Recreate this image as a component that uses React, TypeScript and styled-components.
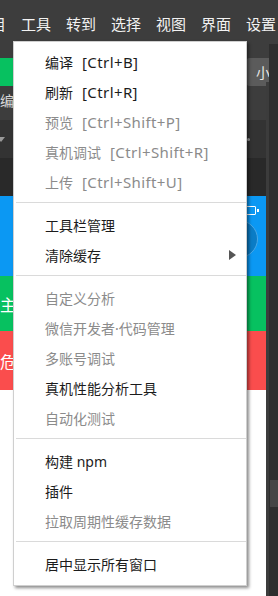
import React from "react";
import styled, { createGlobalStyle } from "styled-components";

const Global = createGlobalStyle`
  html, body { margin: 0; padding: 0; }
  body {
    width: 278px;
    height: 596px;
    overflow: hidden;
    background: #2d2d2d;
    font-family: "Noto Sans", "Noto Sans CJK SC", sans-serif;
  }
`;

const Page = styled.div`
  position: relative;
  width: 278px;
  height: 596px;
  overflow: hidden;
  display: flex;
  flex-direction: column;
`;

const MenuBar = styled.div`
  height: 40px;
  flex: none;
  background: #3d3d3d;
  display: flex;
  align-items: center;
  padding-top: 7px;
  box-sizing: border-box;
  margin-left: -24px;
  gap: 15px;
`;

const BarItem = styled.span`
  color: #f2f2f2;
  font-size: 15px;
  white-space: nowrap;
  width: 30px;
  flex: none;
`;

const Toolbar = styled.div`
  height: 80px;
  flex: none;
  background: #3d3d3d;
  display: grid;
  grid-template-columns: 1fr auto;
  grid-template-rows: 18px 28px 34px;
`;

const GreenBtn = styled.div`
  grid-row: 2;
  grid-column: 1;
  width: 60px;
  background: #07c160;
  color: #fff;
  font-size: 14px;
  display: flex;
  align-items: center;
  justify-content: flex-end;
  padding-right: 48px;
`;

const ModeBtn = styled.div`
  grid-row: 2;
  grid-column: 2;
  margin-right: -30px;
  width: 52px;
  background: #5b5b5b;
  border-radius: 4px;
  color: #e8e8e8;
  font-size: 14px;
  display: flex;
  align-items: center;
  padding-left: 10px;
  white-space: nowrap;
  overflow: hidden;
`;

const ToolLabel = styled.div`
  grid-row: 3;
  grid-column: 1;
  color: #d8d8d8;
  font-size: 14px;
  display: flex;
  align-items: center;
  padding-bottom: 6px;
`;

const Workspace = styled.div`
  flex: 1;
  display: flex;
`;

const Simulator = styled.div`
  width: 266px;
  flex: none;
  display: flex;
  flex-direction: column;
  background: #ffffff;
`;

const SimHeader = styled.div`
  height: 38px;
  background: #333333;
  display: flex;
  align-items: center;
  justify-content: space-between;
  padding: 0 16px 0 0;
`;

const Caret = styled.span`
  width: 0;
  height: 0;
  border-left: 4px solid transparent;
  border-right: 4px solid transparent;
  border-top: 5px solid #9a9a9a;
  margin-left: -3px;
`;

const Dot = styled.span`
  width: 3px;
  height: 3px;
  border-radius: 50%;
  background: #9a9a9a;
`;

const SimSub = styled.div`
  height: 38px;
  background: #292929;
`;

const NavBar = styled.div`
  height: 80px;
  background: #0b98f3;
  position: relative;
`;

const Battery = styled.div`
  position: absolute;
  top: 10px;
  right: 10px;
  width: 9px;
  height: 7px;
  border: 1px solid #ffffff;
  border-radius: 1px;
  &::after {
    content: "";
    position: absolute;
    right: -4px;
    top: 2px;
    width: 2px;
    height: 3px;
    background: #fff;
  }
`;

const Avatar = styled.div`
  position: absolute;
  top: 24px;
  right: 8px;
  width: 36px;
  height: 36px;
  border-radius: 50%;
  background: #0a7cc6;
  border: 1px solid #4aa8e6;
`;

const ColorRow = styled.div<{ $bg: string; $h: number }>`
  height: ${(p) => p.$h}px;
  background: ${(p) => p.$bg};
  color: #ffffff;
  font-family: "Noto Sans CJK SC", sans-serif;
  font-size: 16px;
  display: flex;
  align-items: center;
  white-space: nowrap;
`;

const Divider = styled.div`
  width: 3px;
  flex: none;
  margin-top: -38px;
  background: #3c3c3c;
`;

const Editor = styled.div`
  flex: 1;
  margin-top: -76px;
  background: #2e2e2e;
  display: flex;
  flex-direction: column;
  align-items: stretch;
  padding-top: 436px;
`;

const Thumb = styled.div`
  height: 27px;
  margin-left: 1px;
  background: #454545;
`;

const Menu = styled.div`
  position: absolute;
  left: 13px;
  top: 41px;
  width: 234px;
  box-sizing: border-box;
  background: #ffffff;
  border: 1px solid #cfcfcf;
  box-shadow: 2px 2px 3px rgba(0, 0, 0, 0.45);
  padding: 5px 0 6px 0;
`;

const Item = styled.div<{ $disabled?: boolean }>`
  height: 30px;
  display: flex;
  align-items: center;
  padding-left: 31px;
  padding-right: 10px;
  font-size: 14px;
  color: ${(p) => (p.$disabled ? "#8b8b8b" : "#1c1c1c")};
  white-space: nowrap;
`;

const Label = styled.span`
  flex: 1;
`;

const Shortcut = styled.span`
  margin-left: 9px;
  font-size: 15px;
  letter-spacing: 0.4px;
`;

const Arrow = styled.span`
  width: 0;
  height: 0;
  border-top: 5px solid transparent;
  border-bottom: 5px solid transparent;
  border-left: 7px solid #555555;
`;

const Sep = styled.div`
  height: 1px;
  background: #dadada;
  margin: 5px 0 7px 2px;
`;

type Entry =
  | { kind: "item"; label: string; shortcut?: string; disabled?: boolean; sub?: boolean }
  | { kind: "sep" };

const entries: Entry[] = [
  { kind: "item", label: "编译", shortcut: "[Ctrl+B]" },
  { kind: "item", label: "刷新", shortcut: "[Ctrl+R]" },
  { kind: "item", label: "预览", shortcut: "[Ctrl+Shift+P]", disabled: true },
  { kind: "item", label: "真机调试", shortcut: "[Ctrl+Shift+R]", disabled: true },
  { kind: "item", label: "上传", shortcut: "[Ctrl+Shift+U]", disabled: true },
  { kind: "sep" },
  { kind: "item", label: "工具栏管理" },
  { kind: "item", label: "清除缓存", sub: true },
  { kind: "sep" },
  { kind: "item", label: "自定义分析", disabled: true },
  { kind: "item", label: "微信开发者·代码管理", disabled: true },
  { kind: "item", label: "多账号调试", disabled: true },
  { kind: "item", label: "真机性能分析工具" },
  { kind: "item", label: "自动化测试", disabled: true },
  { kind: "sep" },
  { kind: "item", label: "构建 npm" },
  { kind: "item", label: "插件" },
  { kind: "item", label: "拉取周期性缓存数据", disabled: true },
  { kind: "sep" },
  { kind: "item", label: "居中显示所有窗口" },
];

const menus = ["项目", "工具", "转到", "选择", "视图", "界面", "设置"];

export default function App() {
  return (
    <>
      <Global />
      <Page>
        <MenuBar>
          {menus.map((m) => (
            <BarItem key={m}>{m}</BarItem>
          ))}
        </MenuBar>
        <Toolbar>
          <GreenBtn>‹</GreenBtn>
          <ModeBtn>小程序</ModeBtn>
          <ToolLabel>编译</ToolLabel>
        </Toolbar>
        <Workspace>
          <Simulator>
            <SimHeader>
              <Caret />
              <Dot />
            </SimHeader>
            <SimSub />
            <NavBar>
              <Battery />
              <Avatar />
            </NavBar>
            <ColorRow $bg="#07c160" $h={55}>主要操作</ColorRow>
            <ColorRow $bg="#fa4d4d" $h={59}>危险操作</ColorRow>
          </Simulator>
          <Divider />
          <Editor>
            <Thumb />
          </Editor>
        </Workspace>
        <Menu>
          {entries.map((e, i) =>
            e.kind === "sep" ? (
              <Sep key={i} />
            ) : (
              <Item key={i} $disabled={e.disabled}>
                <Label>
                  {e.label}
                  {e.shortcut && <Shortcut>{e.shortcut}</Shortcut>}
                </Label>
                {e.sub && <Arrow />}
              </Item>
            )
          )}
        </Menu>
      </Page>
    </>
  );
}
